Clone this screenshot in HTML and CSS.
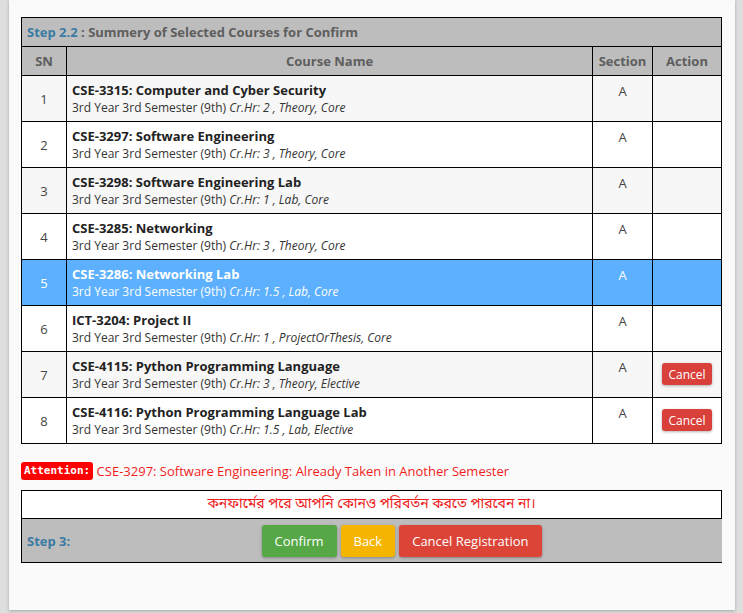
FILE: index.html
```html
<!DOCTYPE html>
<html>
<head>
<meta charset="utf-8">
<link rel="stylesheet" href="styles.css">
</head>
<body>
<div class="panel">
  <table class="courses">
    <thead>
      <tr class="title-row"><th colspan="4"><span class="step">Step 2.2</span> : Summery of Selected Courses for Confirm</th></tr>
      <tr class="head-row"><th class="c-sn">SN</th><th class="c-name">Course Name</th><th class="c-sec">Section</th><th class="c-act">Action</th></tr>
    </thead>
    <tbody>
      <tr class="odd"><td class="sn">1</td><td class="name"><div class="ct">CSE-3315: Computer and Cyber Security</div><div class="cs">3rd Year 3rd Semester (9th) <i>Cr.Hr: 2 , Theory, Core</i></div></td><td class="sec">A</td><td class="act"></td></tr>
      <tr class="even"><td class="sn">2</td><td class="name"><div class="ct">CSE-3297: Software Engineering</div><div class="cs">3rd Year 3rd Semester (9th) <i>Cr.Hr: 3 , Theory, Core</i></div></td><td class="sec">A</td><td class="act"></td></tr>
      <tr class="odd"><td class="sn">3</td><td class="name"><div class="ct">CSE-3298: Software Engineering Lab</div><div class="cs">3rd Year 3rd Semester (9th) <i>Cr.Hr: 1 , Lab, Core</i></div></td><td class="sec">A</td><td class="act"></td></tr>
      <tr class="even"><td class="sn">4</td><td class="name"><div class="ct">CSE-3285: Networking</div><div class="cs">3rd Year 3rd Semester (9th) <i>Cr.Hr: 3 , Theory, Core</i></div></td><td class="sec">A</td><td class="act"></td></tr>
      <tr class="active"><td class="sn">5</td><td class="name"><div class="ct">CSE-3286: Networking Lab</div><div class="cs">3rd Year 3rd Semester (9th) <i>Cr.Hr: 1.5 , Lab, Core</i></div></td><td class="sec">A</td><td class="act"></td></tr>
      <tr class="even"><td class="sn">6</td><td class="name"><div class="ct">ICT-3204: Project II</div><div class="cs">3rd Year 3rd Semester (9th) <i>Cr.Hr: 1 , ProjectOrThesis, Core</i></div></td><td class="sec">A</td><td class="act"></td></tr>
      <tr class="odd"><td class="sn">7</td><td class="name"><div class="ct">CSE-4115: Python Programming Language</div><div class="cs">3rd Year 3rd Semester (9th) <i>Cr.Hr: 3 , Theory, Elective</i></div></td><td class="sec">A</td><td class="act"><button class="btn-sm">Cancel</button></td></tr>
      <tr class="even"><td class="sn">8</td><td class="name"><div class="ct">CSE-4116: Python Programming Language Lab</div><div class="cs">3rd Year 3rd Semester (9th) <i>Cr.Hr: 1.5 , Lab, Elective</i></div></td><td class="sec">A</td><td class="act"><button class="btn-sm">Cancel</button></td></tr>
    </tbody>
  </table>

  <div class="attention"><span class="badge">Attention:</span> CSE-3297: Software Engineering: Already Taken in Another Semester</div>

  <div class="notice">কনফার্মের পরে আপনি কোনও পরিবর্তন করতে পারবেন না।</div>

  <div class="step3">
    <div class="step3-label">Step 3:</div>
    <div class="step3-actions">
      <button class="btn btn-green">Confirm</button>
      <button class="btn btn-yellow">Back</button>
      <button class="btn btn-red">Cancel Registration</button>
    </div>
  </div>
</div>
</body>
</html>
```

FILE: styles.css
```css
html, body {
  margin: 0;
  padding: 0;
}
body {
  background: #dedede;
  font-family: "Open Sans", "Noto Sans", sans-serif;
  color: #333;
  height: 613px;
  overflow: hidden;
}
.panel {
  margin: 0 8px 0 9px;
  background: #fafafa;
  box-shadow: 0 1px 3px rgba(0,0,0,0.25);
  height: 610px;
  box-sizing: border-box;
  padding: 17px 13px 0 12px;
}
.courses {
  width: 701px;
  border-collapse: collapse;
  font-size: 13px;
}
.courses th, .courses td {
  border: 1px solid #000;
}
.title-row th {
  background: #bdbdbd;
  height: 28px;
  padding: 0 5px;
  text-align: left;
  color: #5e5e5e;
  font-weight: 700;
  font-size: 13px;
}
.step {
  color: #3a7aa3;
}
.head-row th {
  background: #bdbdbd;
  height: 28px;
  padding: 0;
  color: #5e5e5e;
  font-weight: 700;
  font-size: 13px;
  text-align: center;
}
.c-sn { width: 44px; }
.c-sec { width: 59px; }
.c-act { width: 68px; }
.courses td {
  height: 46px;
  box-sizing: border-box;
  vertical-align: top;
  padding: 0;
}
.odd td { background: #f7f7f7; }
.even td { background: #fff; }
.active td { background: #5cb0fe; color: #fff; }
.courses td.sn {
  vertical-align: middle;
  text-align: center;
  font-size: 13px;
  color: #444;
}
.active td.sn { color: #fff; }
.courses td.name {
  padding: 5px 5px 0 5px;
}
.ct {
  font-weight: 700;
  font-size: 13px;
  line-height: 18px;
  color: #222;
}
.cs {
  font-size: 12px;
  line-height: 18px;
  color: #333;
}
.active .ct, .active .cs { color: #fff; }
.courses td.sec {
  text-align: center;
  padding-top: 6px;
  font-size: 13px;
  line-height: 18px;
  color: #444;
}
.active td.sec { color: #fff; }
.courses td.act {
  text-align: center;
  padding-top: 11px;
}
.btn-sm {
  font-family: "Open Sans", "Noto Sans", sans-serif;
  font-size: 12px;
  color: #fff;
  background: #d9403a;
  border: 0;
  border-radius: 3px;
  height: 22px;
  width: 50px;
  padding: 0;
  box-shadow: 0 1px 3px rgba(0,0,0,0.3);
}
.attention {
  margin-top: 18px;
  font-size: 13px;
  line-height: 18px;
  color: #f21d1d;
}
.badge {
  display: inline-block;
  background: #ff0000;
  color: #fff;
  font-family: "DejaVu Sans Mono", "Liberation Mono", monospace;
  font-weight: 700;
  font-size: 11px;
  line-height: 18px;
  padding: 0 3px;
  border-radius: 3px;
  vertical-align: top;
}
.notice {
  margin-top: 10px;
  border: 1px solid #000;
  background: #fff;
  text-align: center;
  color: #ee1c1c;
  font-family: "Noto Sans Bengali", "Lohit Bengali", "FreeSerif", "Noto Sans", sans-serif;
  font-size: 14px;
  height: 27px;
  line-height: 27px;
}
.step3 {
  display: flex;
  align-items: center;
  background: #bdbdbd;
  border-left: 1px solid #000;
  border-bottom: 1px solid #000;
  height: 43px;
}
.step3-label {
  width: 54px;
  padding-left: 5px;
  color: #3a7aa3;
  font-weight: 700;
  font-size: 13px;
}
.step3-actions {
  flex: 1;
  display: flex;
  justify-content: center;
  gap: 4px;
}
.btn {
  font-family: "Open Sans", "Noto Sans", sans-serif;
  font-size: 13px;
  color: #fff;
  border: 0;
  border-radius: 3px;
  height: 32px;
  padding: 0 13px;
  box-shadow: 0 1px 3px rgba(0,0,0,0.3);
}
.btn-green { background: #55a845; }
.btn-yellow { background: #f4b400; }
.btn-red { background: #db4437; }
```
